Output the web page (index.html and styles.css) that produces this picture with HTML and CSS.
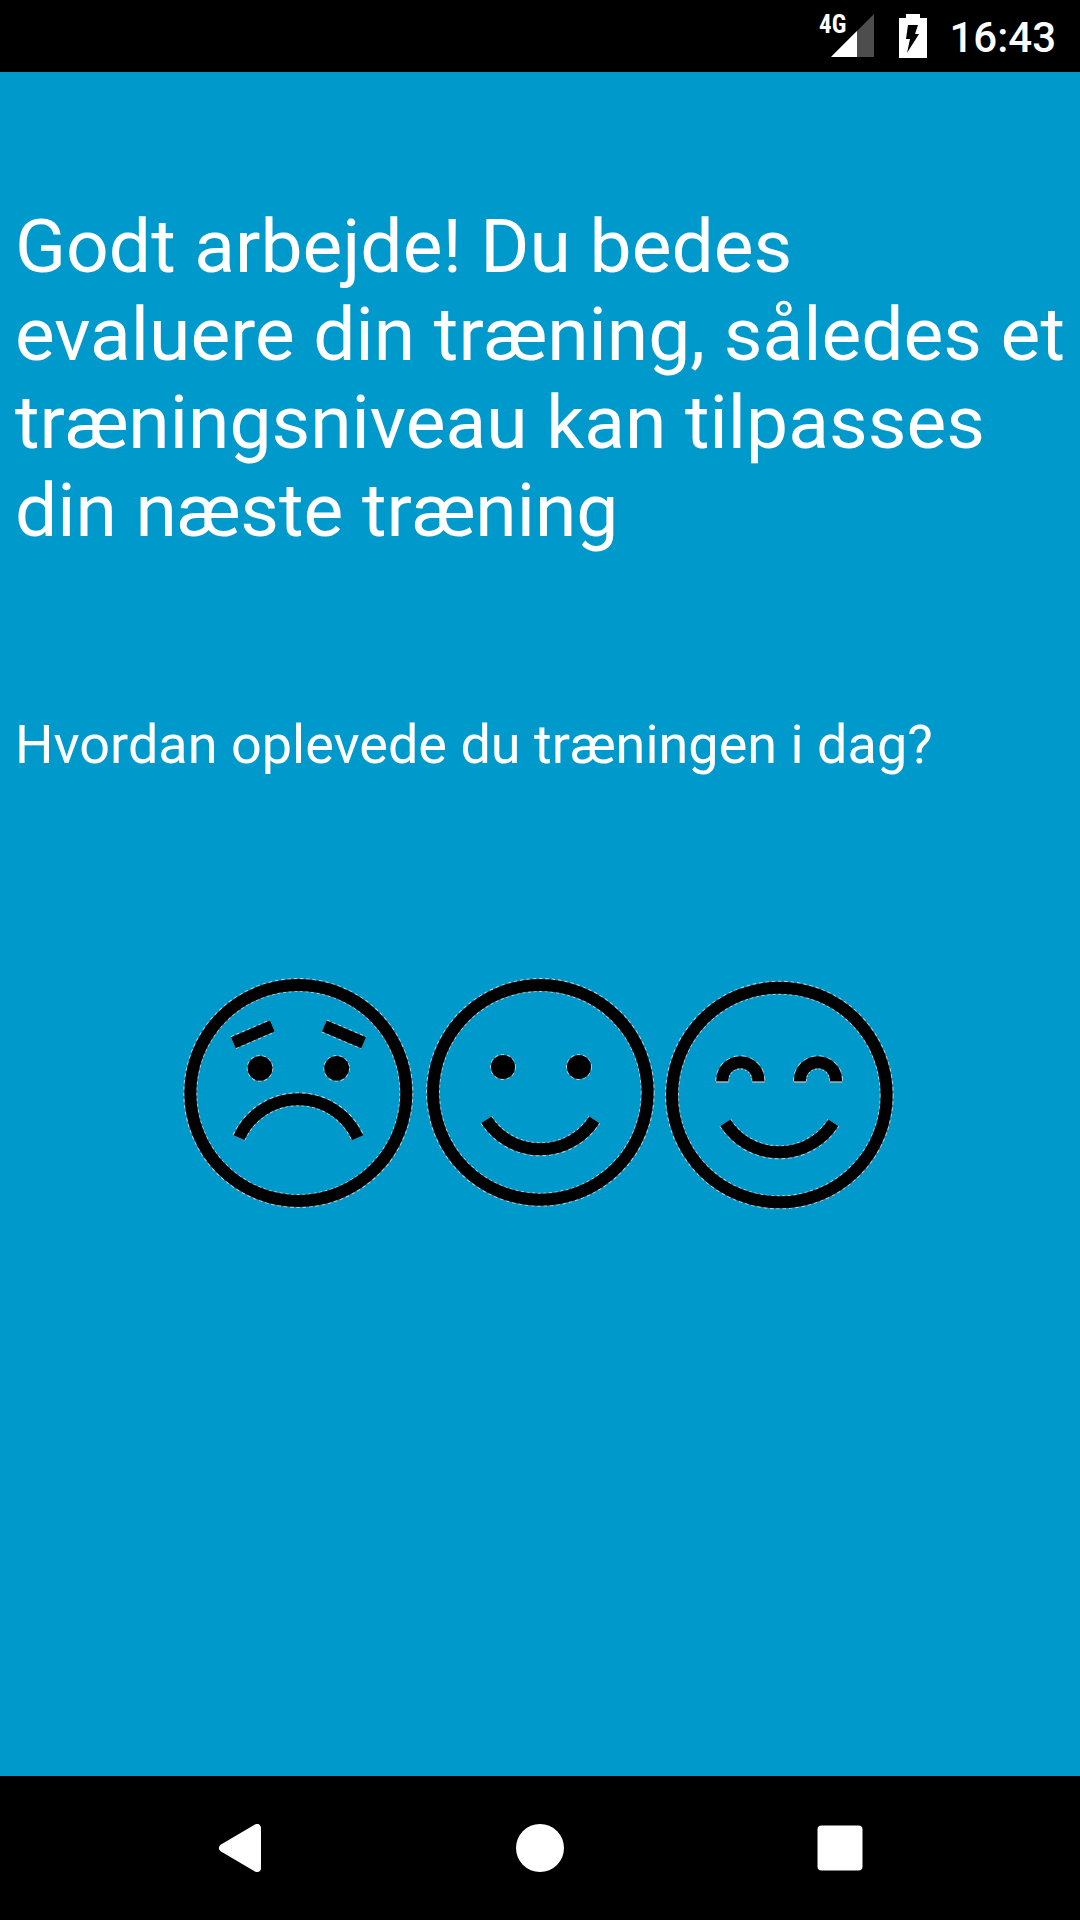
FILE: index.html
```html
<!DOCTYPE html>
<html lang="da">
<head>
  <meta charset="utf-8">
  <meta name="viewport" content="width=device-width, initial-scale=1">
  <title>Evaluering af træning</title>
  <link rel="stylesheet" href="styles.css">
</head>
<body>
  <header class="status-bar">
    <svg class="signal" viewBox="0 -8 56 64" role="img" aria-label="4G">
      <path d="M56 2V45H13z" fill="#4d4d4d"/>
      <path d="M39 19V45H13z" fill="#fff"/>
      <text class="signal-label" x="1" y="21">4G</text>
    </svg>
    <svg class="battery" viewBox="0 0 28 44" role="img" aria-label="Oplader">
      <path d="M7 0H21V4H28V44H0V4H7z" fill="#fff"/>
      <path d="M9 11H19L16 20H20L8 39L11 25H7z" fill="#000"/>
    </svg>
    <time class="clock">16:43</time>
  </header>

  <main class="content">
    <h1 class="heading">Godt arbejde! Du bedes evaluere din træning, således et træningsniveau kan tilpasses din næste træning</h1>
    <p class="question">Hvordan oplevede du træningen i dag?</p>

    <div class="ratings">
      <button class="rating" type="button" aria-label="Hård">
        <svg class="face" viewBox="30 39 720 720">
          <defs>
            <g id="sad">
              <circle cx="385" cy="399" r="324"/>
              <path d="M190 248L307 198M463 198L581 248M207 533A195 195 0 0 1 563 533"/>
            </g>
            <g id="sad-eyes">
              <circle cx="270" cy="325" r="37"/>
              <circle cx="500" cy="325" r="37"/>
            </g>
          </defs>
          <use class="fringe" href="#sad"/>
          <use class="eye-fringe" href="#sad-eyes"/>
          <use class="line" href="#sad"/>
          <use class="eye" href="#sad-eyes"/>
        </svg>
      </button>
      <button class="rating" type="button" aria-label="God">
        <svg class="face" viewBox="30 39 720 720">
          <defs>
            <g id="smile">
              <circle cx="391" cy="397" r="322"/>
              <path d="M229 479A192 192 0 0 0 553 479"/>
            </g>
            <g id="smile-eyes">
              <circle cx="279" cy="321" r="36"/>
              <circle cx="507" cy="321" r="36"/>
            </g>
          </defs>
          <use class="fringe" href="#smile"/>
          <use class="eye-fringe" href="#smile-eyes"/>
          <use class="line" href="#smile"/>
          <use class="eye" href="#smile-eyes"/>
        </svg>
      </button>
      <button class="rating" type="button" aria-label="Let">
        <svg class="face" viewBox="30 39 720 720">
          <defs>
            <g id="happy">
              <circle cx="388" cy="405" r="322"/>
              <path d="M226 488A192 192 0 0 0 550 488M217 364V361A54 54 0 0 1 325 361V364M450 364V361A54 54 0 0 1 558 361V364"/>
            </g>
          </defs>
          <path class="lid-edge" d="M198 366H236M306 366H344M431 366H469M539 366H577"/>
          <use class="fringe" href="#happy"/>
          <use class="line" href="#happy"/>
        </svg>
      </button>
    </div>
  </main>

  <nav class="nav-bar" aria-label="Navigation">
    <button class="nav-button" type="button" aria-label="Tilbage">
      <svg class="nav-icon" viewBox="0 0 48 48"><path d="M7 24L41 4V44z" stroke="#fff" stroke-width="8" stroke-linejoin="round"/></svg>
    </button>
    <button class="nav-button" type="button" aria-label="Hjem">
      <svg class="nav-icon" viewBox="0 0 48 48"><circle cx="24" cy="24" r="24"/></svg>
    </button>
    <button class="nav-button" type="button" aria-label="Seneste apps">
      <svg class="nav-icon" viewBox="0 0 48 48"><rect x="1.5" y="1.5" width="45" height="45" rx="4"/></svg>
    </button>
  </nav>
</body>
</html>
```

FILE: styles.css
```css
* {
  box-sizing: border-box;
}

body {
  display: flex;
  flex-direction: column;
  min-height: 100vh;
  margin: 0;
  background: #0099cc;
  color: #fff;
  font-family: Roboto, "Noto Sans", sans-serif;
}

button {
  padding: 0;
  border: 0;
  background: none;
  cursor: pointer;
}

svg {
  display: block;
}

.status-bar {
  display: flex;
  align-items: center;
  justify-content: flex-end;
  height: 72px;
  padding: 0 24px;
  background: #000;
}

.signal {
  width: 56px;
  height: 64px;
  margin-right: 25px;
}

.signal-label {
  fill: #fff;
  font-family: "Roboto Condensed", "Liberation Sans Narrow", Roboto, sans-serif;
  font-size: 25px;
  font-weight: 700;
}

.battery {
  width: 28px;
  height: 44px;
  margin-right: 22px;
}

.clock {
  padding-top: 4px;
  font-size: 42px;
  font-weight: 500;
  line-height: 48px;
}

.content {
  flex: 1;
  padding: 130px 15px 0;
}

.heading {
  margin: 0 0 159px;
  font-size: 75px;
  font-weight: 400;
  line-height: 88px;
}

.question {
  margin: 0 0 196px;
  font-size: 54px;
  font-weight: 400;
  line-height: 64px;
}

.ratings {
  display: flex;
  justify-content: center;
}

.face {
  width: 240px;
  height: 240px;
}

.line {
  fill: none;
  stroke: #000;
  stroke-width: 36;
}

.fringe {
  fill: none;
  stroke: #c8c8c8;
  stroke-width: 42;
  stroke-dasharray: 10 8;
}

.lid-edge {
  stroke: #b4b4b4;
  stroke-width: 4;
}

.eye {
  fill: #000;
}

.eye-fringe {
  fill: none;
  stroke: #c8c8c8;
  stroke-width: 6;
  stroke-dasharray: 10 8;
}

.nav-bar {
  display: grid;
  grid-template-columns: repeat(3, 1fr);
  height: 144px;
  padding: 0 90px;
  background: #000;
}

.nav-button {
  display: flex;
  align-items: center;
  justify-content: center;
}

.nav-icon {
  width: 48px;
  height: 48px;
  fill: #fff;
}
```
